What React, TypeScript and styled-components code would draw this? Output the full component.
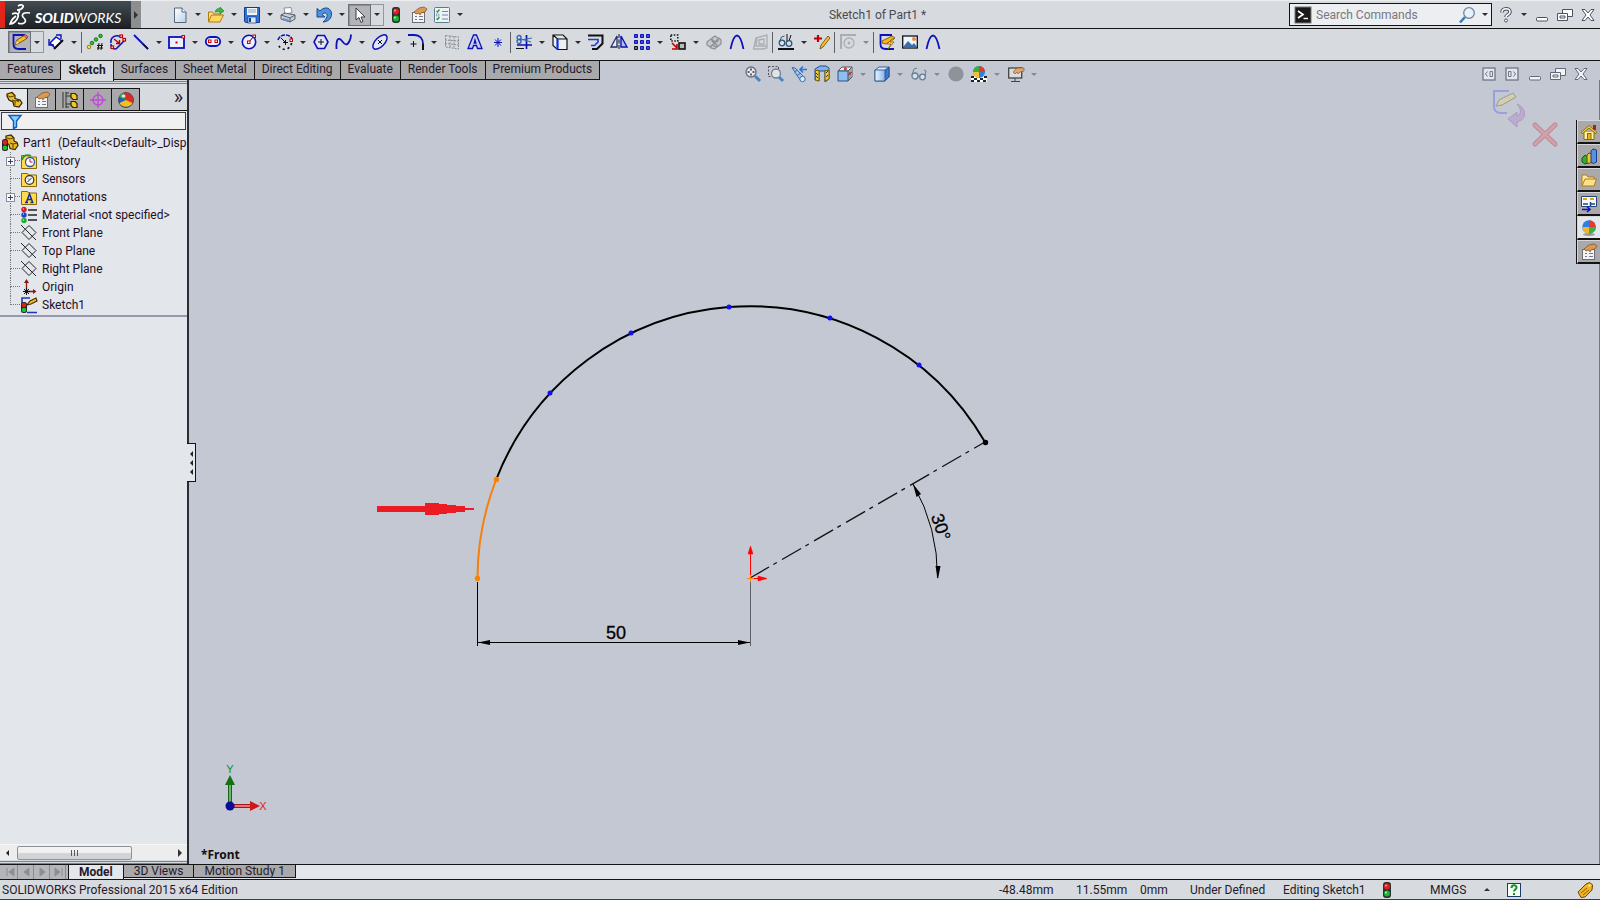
import React from "react";
import styled, { createGlobalStyle, css } from "styled-components";

const color = {
  bar: "#d7dadf",
  tab: "#a9a9ab",
  canvas: "#c4c8d3",
  panel: "#e3e6eb",
  line: "#141414",
  text: "#231a2b",
};

const GlobalStyle = createGlobalStyle`
  *, *::before, *::after { box-sizing: border-box; }
  body { margin: 0; background: ${color.bar}; }
  button, input { font: inherit; color: inherit; padding: 0; margin: 0; border: 0; background: none; }
  ul { list-style: none; margin: 0; padding: 0; }
`;

const Page = styled.div`
  display: flex;
  flex-direction: column;
  min-height: 100vh;
  overflow: hidden;
  color: ${color.text};
  font: 12px/16px Roboto, "Open Sans", sans-serif;
`;

/* ---------- icons ---------- */

const B = "#0a12b8";
const K = "#111";
const R = "#c00000";
const G = "#8b8e93";

const icons: Record<string, React.ReactNode> = {
  new: <><path d="M2.5 1h7.5l4 4v10.5h-11.5z" fill="url(#paper)" stroke="#55667a" /><path d="M10 1v4h4" fill="#fff" stroke="#55667a" /></>,
  open: <><path d="M.5 15V5h4l1.500 2h6v2" fill="#fbe08a" stroke="#b27a12" /><path d="M.5 15l3-7h12l-3.500 7z" fill="#ffd75c" stroke="#b27a12" /><path d="M7 5c1-3 3-4 5-3.500V0l4 4-4 3V5c-2-.5-3 0-5 0z" fill="#3fb63a" stroke="#1f7a1d" strokeWidth=".6" /></>,
  save: <><path d="M.5.500h15v15h-14l-1-1z" fill="#2f74d8" stroke="#123c8c" /><rect x="3" y="1" width="10" height="7" fill="#f2f5fa" /><path d="M4 3h8M4 5h8" stroke="#8ea3c0" /><rect x="4" y="10" width="8" height="6" fill="#dfe6ef" stroke="#123c8c" strokeWidth=".7" /><rect x="5" y="11" width="2" height="4" fill="#123c8c" /></>,
  print: <><path d="M4 1l7-.5 1 5-7 2z" fill="#fff" stroke="#8892a0" /><path d="M1 8l4-2 10 2v4l-5 3-9-3z" fill="#c9cfd8" stroke="#555d68" /><path d="M1 8l9 3 5-3M10 11v4" fill="none" stroke="#555d68" /><path d="M3 12l6 2" stroke="#5b93d8" strokeWidth="2" /></>,
  undo: <path d="M1 1.500v8.500h8L6 7.500c3-3 6-1 5 2-.5 2-2 4-4 5.500 6-.5 8.500-4 8.500-8C15.500 1 9-1.500 4 4z" fill="#4f93dc" stroke="#154a8e" />,
  cursor: <path d="M4 1v12l3-2.500 2 5 2-1-2-4.500h4z" fill="#fff" stroke="#333a44" />,
  traffic: <><rect x="4" y="0" width="8" height="16" rx="3" fill="#2b2f2d" /><circle cx="8" cy="4.500" r="3" fill="#e02020" /><circle cx="8" cy="11.500" r="3" fill="#19b432" /><circle cx="7" cy="3.500" r="1" fill="#ff9a8a" /><circle cx="7" cy="10.500" r="1" fill="#a6ffb0" /></>,
  props: <><rect x="1.500" y="5.500" width="12" height="10" fill="#f4f4f4" stroke="#6c6f75" /><path d="M4 9.500h2M4 12.500h2M8 9.500h4M8 12.500h4" stroke="#6c7a90" /><path d="M3 5l5-4 5-1 3 2-2 3-4 1-1 2-1-2-3 1z" fill="#d99a57" stroke="#7c4a18" strokeWidth=".7" /></>,
  list: <><rect x=".500" y=".500" width="15" height="15" rx="1" fill="#eef3f8" stroke="#5c7893" /><path d="M2.500 4l1 1 2-2.500M2.500 11.500l1 1 2-2.500" fill="none" stroke="#1d9a30" strokeWidth="1.300" /><path d="M8 4.500h6M8 8h6M8 12h6" stroke="#6f86a0" /><rect x="2.500" y="7" width="2.500" height="2" fill="none" stroke="#6f86a0" strokeWidth=".6" /></>,
  sketch: <><path d="M13 1H1.500v9q0 5 5 5H14" fill="none" stroke={B} strokeWidth="1.800" /><path d="M3 11l2-5 8-5 2.500 3-8 5z" fill="#f6c022" stroke="#6b4a08" strokeWidth=".9" /><path d="M12 1.500l1-1 3 2-1.500 2z" fill="#e06a72" stroke="#6b2a28" strokeWidth=".5" /><path d="M5 6l2.500 3L3 11z" fill="#fff0c0" stroke="#6b4a08" strokeWidth=".5" /></>,
  dimension: <><path d="M2 9l6-6 6 4-7 7z" fill="#fff" stroke={B} strokeWidth="1.500" /><path d="M6 15l9-9" stroke={K} strokeWidth="2" /><path d="M1 5v6h5M8 1h5v4" fill="none" stroke={B} strokeWidth="1.400" /></>,
  points: <><g fill="#28c428" stroke="#0a6410" strokeWidth=".8"><circle cx="5" cy="9" r="1.800" /><circle cx="9" cy="5.500" r="1.800" /><circle cx="13.500" cy="2" r="1.800" /></g><circle cx="2" cy="13" r="1.800" fill="#ffd94a" stroke="#8a6408" strokeWidth=".8" /><path d="M12 9l-1 7M15 9l-1 7M10 11.500h6M10 14h6" stroke={K} /></>,
  rotSlot: <><path d="M1 9c-1-6 5-9 10-6M6 15l9-9M1 10c0 3 2 5 5 5" fill="none" stroke={B} strokeWidth="1.600" /><g fill="#fff" stroke={R} strokeWidth="1.200"><rect x="10" y="1" width="2.500" height="2.500" /><rect x="13" y="4.500" width="2.500" height="2.500" /><rect x="1" y="12" width="2.500" height="2.500" /></g><path d="M4 5l5 4M9.500 6v3.500H6" stroke={R} fill="none" strokeWidth="1.400" /></>,
  line: <><path d="M1 1l14 14" stroke={B} strokeWidth="1.800" /><path d="M10 10l5 5" stroke={K} strokeWidth="1.500" /></>,
  rect: <><rect x="0" y="3" width="15" height="11" fill="#eef" stroke={B} strokeWidth="1.800" /><rect x="6.500" y="7.500" width="2" height="2" fill={R} /><rect x="13" y="1.500" width="2.500" height="2.500" fill="#fff" stroke={R} /></>,
  slot: <><rect x=".8" y="3" width="14.400" height="9" rx="4.500" fill="#eef" stroke={B} strokeWidth="1.800" /><g fill="#fff" stroke={R}><rect x="3.500" y="6" width="2.500" height="2.500" /><rect x="10" y="6" width="2.500" height="2.500" /></g></>,
  circle: <><circle cx="8" cy="8" r="6.700" fill="#eef" stroke={B} strokeWidth="1.600" /><path d="M8 8l5-6" stroke={K} /><rect x="6.500" y="7" width="2.500" height="2.500" fill="#fff" stroke={R} /><rect x="12" y="1" width="2.500" height="2.500" fill="#fff" stroke={R} /></>,
  arc: <><path d="M1 6C3-.5 13-.5 15 5" fill="none" stroke={B} strokeWidth="1.600" strokeDasharray="4 1" /><path d="M14.500 9c-1 7-10 9-13 2" fill="none" stroke={K} strokeWidth="1.700" strokeDasharray="2 3" /><path d="M4 4l4 4M6 8.500h5M8.500 6v5" stroke={K} /><rect x="13" y="5" width="2.500" height="2.500" fill="#fff" stroke={R} /></>,
  polygon: <><path d="M4.500 1.500h7L15 8l-3.500 6.500h-7L1 8z" fill="#e4e6f8" stroke={B} strokeWidth="1.600" /><path d="M8 5v6M5 8h6" stroke={K} /></>,
  spline: <path d="M.5 15C0 6 2 2 6 7c3 4 5 5 7.500 0C15 4 15 2 15 .5" fill="none" stroke={B} strokeWidth="1.800" />,
  ellipse: <><ellipse cx="8" cy="8" rx="9" ry="4.500" transform="rotate(-45 8 8)" fill="#e4e6f8" stroke={B} strokeWidth="1.500" /><path d="M6 6l4 4M10 6l-4 4" stroke={K} /></>,
  fillet: <><path d="M0 1h6c6 0 9 4 9 9" fill="none" stroke={B} strokeWidth="1.800" /><path d="M15 10v6" stroke={K} strokeWidth="2" /><path d="M5.500 7v6M2.500 10h6" stroke={K} /></>,
  plane: <g fill="none" stroke={G} strokeDasharray="2 1"><path d="M1.500 1.500l13 1.500v12l-13-2zM6 2v11M10 2.500v12M1 6l14 1M1 9.500l14 1.500" /></g>,
  text: <path d="M6.500 1h3l5.500 13.500h-4.500l-1-3h-3l-1 3H1zM7.300 9h1.600L8 6z" fill="#c9ccf0" stroke={B} strokeWidth="1.300" />,
  point: <path d="M8 4v9M4 8.500h8M5 5.500l6 6M11 5.500l-6 6" stroke={B} />,
  trim: <><path d="M10.500 1v14M1 11h15" stroke={B} strokeWidth="1.700" /><path d="M5 6l11-2M5 5l10 3" stroke="#3f6bb0" strokeWidth="1.200" /><circle cx="3" cy="3.500" r="2" fill="none" stroke="#2e5fb0" strokeWidth="1.300" /><circle cx="3" cy="7.500" r="2" fill="none" stroke="#2e5fb0" strokeWidth="1.300" /><path d="M0 14.500h8" stroke={K} /></>,
  convert: <><path d="M1 1h10l4 4v10.500H5.500l-4.500-4zM1 1l4.500 4H15" fill="#eef0f4" stroke={K} strokeWidth="1.200" /><path d="M5.500 5v10.500" stroke="#0a2ff0" strokeWidth="2.200" /></>,
  offset: <><path d="M0 1.500h14.500v8L9 15H4" fill="none" stroke={K} strokeWidth="2" /><path d="M0 5.500h10v2.500L6.500 11.500H3" fill="none" stroke="#1b3fd0" strokeWidth="1.700" /></>,
  mirror: <><path d="M6 2v11H0z" fill="#e9ebf5" stroke="#222a66" strokeWidth="1.300" /><path d="M10 2v11h6z" fill="#b7bff0" stroke={B} strokeWidth="1.400" /><path d="M8 0v16" stroke={K} strokeDasharray="4 1.500" /></>,
  pattern: <g fill="#4250cf" stroke={B}><path d="M.5.500h3v3h-3zM6.500.500h3v3h-3zM12.500.500h3v3h-3zM.5 6.500h3v3h-3zM6.500 6.500h3v3h-3zM12.500 6.500h3v3h-3zM6.500 12.500h3v3h-3zM12.500 12.500h3v3h-3z" /><path d="M.5 12.500h3v3h-3z" fill="#777" stroke={K} /></g>,
  move: <><rect x=".800" y="1" width="7" height="6" fill="none" stroke={K} strokeWidth="1.500" strokeDasharray="1.500 1.500" /><rect x="9" y="9" width="6" height="6" fill="#bbb" stroke={K} strokeWidth="1.600" /><path d="M2 9l5 5M7 10v5H2" stroke={R} fill="none" strokeWidth="1.600" /></>,
  grid3d: <g fill="#c3c5c9" stroke="#7b7e83" strokeWidth="1.200"><path d="M1 8l4-3 3 2 0 3-4 3-3-2zM6 4l3-2 3 2v3l-4 2-2-2zM10 7l3-3 2 2v4l-4 3-3-1v-3zM5 12l4-3 2 2-2 4-4-1z" /></g>,
  curve: <path d="M1.500 15C3 8 5 1.500 8 1.500S13 8 14.500 15" fill="none" stroke={B} strokeWidth="1.800" />,
  surface: <path d="M4 4l11-3v13l-4 1H1.500zM5 4l-1 8h11M7 6l5-1v5H7z" fill="none" stroke="#a0a2a6" strokeWidth="1.300" />,
  relations: <><path d="M0 15h16" stroke={K} strokeWidth="2" /><path d="M9 0v7M13 1l-2 6" stroke={K} /><circle cx="4" cy="9" r="2.800" fill="#cfe3f3" stroke="#34566f" strokeWidth="1.300" /><circle cx="11" cy="9.500" r="2.800" fill="#cfe3f3" stroke="#34566f" strokeWidth="1.300" /><path d="M1.500 8l2-5 3-1" fill="none" stroke="#34566f" /></>,
  repair: <><path d="M4 1v7M0 4.500h8" stroke={R} strokeWidth="2.200" /><path d="M6 15l1-4 7-9 2 2-7 9z" fill="#f5c12c" stroke="#75500a" strokeWidth=".9" /></>,
  snap: <><path d="M1 15V1h15" fill="none" stroke="#a0a3a8" strokeWidth="2" /><circle cx="9" cy="9" r="5" fill="none" stroke="#a0a3a8" strokeWidth="1.300" /><circle cx="9" cy="9" r="1.500" fill="#a0a3a8" /></>,
  rapid: <><path d="M13 1H1.500v9q0 5 5 5H15" fill="none" stroke={B} strokeWidth="1.800" /><path d="M3 7l10-5 3 2-9 6-4-1z" fill="#f6b322" stroke="#6b4a08" strokeWidth=".800" /><path d="M13 5L8 10h4l-3 5 6-7h-4l4-3z" fill="#ffe14a" stroke="#8a5a00" strokeWidth=".800" /></>,
  picture: <><rect x=".700" y="2" width="14.600" height="12" fill="#eef6ff" stroke={K} strokeWidth="1.300" /><path d="M1 13l5-6 4 4 2-2 3 4z" fill="#3d6ea8" /><circle cx="12" cy="5" r="2" fill="#f08a3a" /></>,
  zoomFit: <><path d="M10 10l5 5" stroke="#4b82c4" strokeWidth="3" /><circle cx="6" cy="6" r="5" fill="#e6e9ee" stroke="#686e7a" strokeWidth="1.300" /><path d="M6 2.500v2M6 7.500v2M2.500 6h2M7.500 6h2" stroke="#333" strokeWidth="1.500" /></>,
  zoomArea: <><rect x=".500" y=".500" width="10" height="10" fill="none" stroke="#555" strokeDasharray="2 1.500" /><path d="M11 11l4 4" stroke="#4b82c4" strokeWidth="3" /><circle cx="8" cy="7.500" r="4.500" fill="#dfe3ea" stroke="#777e8a" strokeWidth="1.300" /></>,
  prevView: <><path d="M1 1.500l3 .5 9 9-3 4-5-7z" fill="#9cc4ee" stroke="#3b6ea8" /><path d="M3 6l4-2M6 9.500L10 7" stroke="#3b6ea8" /><circle cx="11.500" cy="13" r="2.700" fill="#d9ebfb" stroke="#3b6ea8" /><path d="M16 3.500h-6M12 .5l-3 3 3 3" fill="none" stroke="#2f6fd0" strokeWidth="1.500" /></>,
  section: <><path d="M1 3l5-3h6l3 2v11l-4 3V5H5v10l-4-1z" fill="#7fb2ec" stroke="#234f8c" /><path d="M1.500 4.500H5V15l-3.500-1zM11 4.500h4V13l-4 2z" fill="#f5cf30" stroke="#77610a" /><path d="M2 7l2 2M2 10l2 2M12 7l2-2M12 11l2-2" stroke="#333" /></>,
  orient: <><path d="M5 1h10v10l-4 4V5H1z" fill="#eceff3" stroke="#555" /><path d="M1 5h10v10H1z" fill="#8fbdf0" stroke="#28538e" /><path d="M11 5l4-4M8 1v4M13 3v10M11 9l4-3" stroke="#555" /><path d="M7 3h3M13 6v3" stroke="#d22" strokeWidth="1.300" /></>,
  display: <><path d="M1 4l4-3h10v10l-4 4H1z" fill="#dce9f8" stroke="#3c5f96" /><path d="M11 4l4-3v10l-4 4z" fill="#3d79cf" stroke="#28538e" /><path d="M1 4h10v11H1z" fill="url(#cubeFace)" stroke="#3c5f96" /></>,
  glasses: <g stroke="#6a7d8e"><circle cx="4" cy="10" r="3" fill="#cfe3f3" strokeWidth="1.300" /><circle cx="11.500" cy="11" r="2.800" fill="#cfe3f3" strokeWidth="1.300" /><path d="M1 9l2-6 3-1M7 10l2 0M14 10l1-5-2-1" fill="none" /></g>,
  greyBall: <circle cx="8" cy="8" r="7.600" fill="#8e9299" />,
  scene: <><path d="M0 10h16v6H0z" fill="#fff" /><path d="M0 10h3v2H0zM3 12h3v2H3zM0 14h3v2H0zM6 14h3v2H6zM9 12h3v2H9zM13 10h3v2h-3zM12 14h3v2h-3z" fill="#222" /><circle cx="8" cy="6" r="6" fill="#2f7fe0" /><path d="M8 6V0a6 6 0 0 0-6 6z" fill="#3fae49" /><path d="M8 6V0a6 6 0 0 1 6 6z" fill="#e33b2e" /><path d="M8 6v6a6 6 0 0 1-6-6z" fill="#f4c430" /></>,
  viewSet: <><rect x=".700" y="2" width="13" height="10" fill="#d8dbe0" stroke="#444" strokeWidth="1.300" /><path d="M7 12v3M3 15.500h9" stroke="#444" /><path d="M5 6l4-4 7 0v3l-4 1-2 2-1-2-2 2z" fill="#e0a868" stroke="#7c4a18" strokeWidth=".600" /></>,
  part: <><path d="M1 2l5-1.500 3 3v3l5 1.500 2 3-3 4-5-1-1-4-4-2-2-4z" fill="#f0c02a" stroke="#332600" strokeWidth="1.200" /><path d="M1 3l3 2 4-1M6 8l3 1 5-1M9 9v4" fill="none" stroke="#5a4300" /><circle cx="12" cy="9" r="1" fill="#5a4300" /></>,
  partRoot: <><path d="M4 1l5-1 3 3v3l3 1.500 1 3-3 4-5-1-1-4-3-2z" fill="#e8b824" stroke="#332600" strokeWidth="1.200" /><path d="M8 8l3 1 4-1M11 9v4M5 3l3 1 3-1" fill="none" stroke="#5a4300" /><rect x="0" y="4" width="6" height="12" rx="2.500" fill="#222" /><circle cx="3" cy="7.500" r="2.400" fill="#e02020" /><circle cx="3" cy="12.800" r="2.400" fill="#19c432" /></>,
  config: <><path d="M1 0v16M4 0v16M4 4h5M4 12h5M4 1h3M4 15h3" stroke="#333" /><path d="M9 1.500h4l2 2v4h-4l-2-2zM9 9.500h4l2 2v4h-4l-2-2z" fill="#f4c828" stroke="#332600" strokeWidth="1.200" /></>,
  target: <g stroke="#c04ad8" fill="none" strokeWidth="1.400"><circle cx="8" cy="8" r="5" /><path d="M8 0v16M0 8h16" /></g>,
  ball: <><circle cx="8" cy="8" r="7.500" fill="#2b57c8" stroke="#222" strokeWidth=".600" /><path d="M8 8L1 5a7.500 7.500 0 0 1 5-4.500z" fill="#2fa24a" /><path d="M8 8L6 .7A7.500 7.500 0 0 1 14.500 11z" fill="#df2a20" /><path d="M8 8l6.500 3a7.500 7.500 0 0 1-13 0z" fill="#f2c21c" /><ellipse cx="5.500" cy="4" rx="2" ry="1.500" fill="#fff" opacity=".8" /></>,
  ballTask: <><ellipse cx="8" cy="14.500" rx="6" ry="1.500" fill="#9a9a9a" /><circle cx="8" cy="7" r="6.800" fill="#2f7fe0" /><path d="M8 7V.200a6.800 6.800 0 0 1 6.800 6.800z" fill="#e33b2e" /><path d="M8 7h6.800A6.800 6.800 0 0 1 8 13.800z" fill="#3fae49" /><path d="M8 7v6.800A6.800 6.800 0 0 1 1.200 7z" fill="#f2b42a" /></>,
  filter: <path d="M2 2.500h12L9.500 8v6l-3 1.500V8z" fill="#8fd0ff" stroke="#0c5cc0" strokeWidth="1.400" />,
  history: <><path d="M.500 2.500h6l1 1.500h8v11.500H.500z" fill="#ffdb4d" stroke="#8a6a08" /><circle cx="9" cy="9" r="4.500" fill="#fff" stroke="#3352b8" strokeWidth="1.300" /><path d="M9 6v3h2.500" fill="none" stroke="#b02020" /><path d="M1 7c1-5 6-6 9-4" fill="none" stroke="#1d9a30" strokeWidth="1.700" /></>,
  sensors: <><path d="M.500 2.500h6l1 1.500h8v11.500H.500z" fill="#ffdb4d" stroke="#8a6a08" /><circle cx="8.500" cy="9" r="4.300" fill="#eef4ff" stroke="#333" strokeWidth="1.200" /><path d="M6.500 11l4-4M7 7.500l1 1" stroke="#222" /></>,
  annotations: <><path d="M.500 2.500h6l1 1.500h8v11.500H.500z" fill="#ffdb4d" stroke="#8a6a08" /><path d="M4 13.500h3M9.500 13.500h3M5.500 13l3-8 3 8M6.500 10.500h4" fill="none" stroke="#12309c" strokeWidth="1.500" /></>,
  material: <><path d="M7 3h9M7 8h9M7 13h9" stroke="#222" strokeWidth="1.600" /><circle cx="3" cy="2.500" r="2.700" fill="#d82020" /><circle cx="3" cy="8" r="2.700" fill="#2040d0" /><circle cx="3" cy="13.500" r="2.700" fill="#28a838" /><path d="M2 2h1M2 7h1M2 13h1" stroke="#fff" /></>,
  planeTree: <path d="M8 .5l7 7-7 7-7-7zM0 0l15 15" fill="none" stroke="#222" />,
  origin: <><path d="M5.500 13V2M5 12.500h9" stroke="#8c1a14" strokeWidth="1.300" /><path d="M3 4l2.500-4L8 4zM12 10l3.500 2.500L12 15z" fill="#8c1a14" /><path d="M3 10l5 5M8 10l-5 5M5.500 9v7M2 12.500h7" stroke={K} /></>,
  sketchTree: <><path d="M9 1H1v7M6 15.500h10" fill="none" stroke="#1c36c0" strokeWidth="1.600" /><path d="M6 8l3-4 6-3 1 3-6 3z" fill="#f6b832" stroke="#4a3206" strokeWidth="1.200" /><rect x="0" y="5" width="6" height="11" rx="2.500" fill="#222" /><circle cx="3" cy="8" r="2.300" fill="#e02020" /><circle cx="3" cy="13" r="2.300" fill="#19c432" /></>,
  home: <><rect x="12" y="1" width="3" height="5" fill="#b02020" /><path d="M3 8v7.500h10V8" fill="#fff0a8" stroke="#8a6a08" /><path d="M0 8.500l8-7 8 7-1.500 1L8 4 1.500 9.500z" fill="#ffd028" stroke="#6a4c04" strokeWidth=".700" /><rect x="6.500" y="9.500" width="3.500" height="6" fill="#e8b420" stroke="#8a6a08" /></>,
  library: <><path d="M1 10l3-3 3 2v6l-3 1-3-2z" fill="#2fae34" stroke="#0b5a10" /><path d="M6 7l2-2 3 1v8l-3 1.500-2-1z" fill="#f2c428" stroke="#6a4c04" /><path d="M10 3l2-2 3.500 1v12l-3 1.500-2.500-1z" fill="#5a8fe8" stroke="#173c88" /></>,
  folder: <><path d="M1 14V3h5l1 2h6v3" fill="#ffe9a0" stroke="#b07a18" /><path d="M1 14l3-7h11.500L13 14z" fill="#ffe08a" stroke="#b07a18" /></>,
  palette: <><path d="M.500.500h15v10H.500z" fill="#f5f8fc" stroke="#24447c" /><path d="M2 3h4M9 3h4" stroke="#d8a810" strokeWidth="2" /><path d="M2 8h5M9.500 6v4M9 8h5" stroke="#24447c" strokeWidth="1.500" /><path d="M1 13.500h7M6 10.500l3 3-3 2.500" fill="none" stroke="#0a12d8" strokeWidth="1.600" /></>,
  terminal: <><rect width="16" height="16" fill="#1a1a1a" stroke="#777" /><path d="M3 4l5 3.500L3 11" fill="none" stroke="#fff" strokeWidth="1.700" /><path d="M8.500 11.500H13" stroke="#fff" strokeWidth="1.400" /></>,
  magnifier: <><path d="M6 10l-5 5.500" stroke="#3c7ab4" strokeWidth="2.600" /><circle cx="10" cy="6" r="5.300" fill="#e8f1fa" stroke="#6d86a4" strokeWidth="1.300" /></>,
  help: <><path d="M4 5.500c0-5 8-5 8-.5 0 3-4 2.500-4 5" fill="none" stroke="#4c5262" strokeWidth="3.600" /><path d="M4 5.500c0-5 8-5 8-.5 0 3-4 2.500-4 5" fill="none" stroke="#fff" strokeWidth="1.500" /><circle cx="8" cy="13.500" r="1.500" fill="#fff" stroke="#4c5262" /></>,
  minimize: <rect x="2.500" y="10.500" width="11" height="3.500" rx="1" fill="#fff" stroke="#4c5262" />,
  restore: <g fill="#fff" stroke="#4c5262"><path d="M5.500 2.500h10v7h-10z" /><path d="M.5 6.500h10v7H.500zM3 9h5v2H3z" /></g>,
  close: <path d="M2 2.500h3L8 6l3-3.500h3L10 8l4 5.500h-3L8 10l-3 3.500H2L6 8z" fill="#fff" stroke="#4c5262" />,
  dockLeft: <><rect x="2" y="2" width="12" height="12" fill="#eceef2" stroke="#5d6272" strokeWidth="1.300" /><path d="M6.500 5.500L4.500 8l2 2.500M9 5.500h2.500v5H9z" fill="none" stroke="#5d6272" /></>,
  dockRight: <><rect x="2" y="2" width="12" height="12" fill="#eceef2" stroke="#5d6272" strokeWidth="1.300" /><path d="M9.500 5.500l2 2.500-2 2.500M4.500 5.500H7v5H4.500z" fill="none" stroke="#5d6272" /></>,
  tag: <><path d="M1 10L9 2l4-1.500L15.500 3 15 8l-7 7-4 .5z" fill="#f2b420" stroke="#6a4604" /><path d="M4 11l6-5M6 13l6-5" stroke="#8a5c08" /><circle cx="12.500" cy="3.500" r="1" fill="#fff" /></>,
  quickHelp: <><rect x="1.500" y="1.500" width="13" height="13" fill="#f4fff4" stroke="#1c3a6a" /><path d="M5.500 6c0-3.500 5-3.500 5-.5 0 2-2.500 2-2.500 4M8 11v2" fill="none" stroke="#12902a" strokeWidth="2" /></>,
};

const Glyph = styled.svg`
  display: block;
  flex: none;
  overflow: visible;
`;

const Icon = ({ name }: { name: string }) => (
  <Glyph width="16" height="16" viewBox="0 0 16 16" aria-hidden="true">{icons[name]}</Glyph>
);

const HiddenSvg = styled.svg`
  position: absolute;
`;

const Defs = () => (
  <HiddenSvg width="0" height="0" aria-hidden="true">
    <defs>
      <linearGradient id="paper" x1="0" y1="0" x2="1" y2="1"><stop offset="0" stopColor="#fff" /><stop offset="1" stopColor="#b9d3ea" /></linearGradient>
      <linearGradient id="cubeFace" x1="0" y1="0" x2="1" y2="0"><stop offset="0" stopColor="#eef5fd" /><stop offset="1" stopColor="#86b4ee" /></linearGradient>
    </defs>
  </HiddenSvg>
);

/* ---------- buttons ---------- */

const ToolButton = styled.button<{ $active?: boolean; $dim?: boolean }>`
  display: flex;
  flex: none;
  align-items: center;
  justify-content: center;
  width: 23px;
  height: 22px;
  opacity: ${(p) => (p.$dim ? 0.8 : 1)};
  ${(p) => p.$active && css`background: #b2b4b9; border: 1px solid #6d7076; box-shadow: inset 1px 1px 1px #8c8f95;`}
`;

const ArrowButton = styled.button<{ $wide?: boolean; $framed?: boolean }>`
  display: flex;
  flex: none;
  align-items: center;
  justify-content: center;
  width: ${(p) => (p.$wide ? 14 : 13)}px;
  height: 22px;
  ${(p) => p.$framed && css`border: 1px solid #94979d; border-left: 0;`}
`;

const Caret = styled.span<{ $dim?: boolean }>`
  border: 3px solid transparent;
  border-top: 3px solid ${(p) => (p.$dim ? "#85888f" : "#2c2c30")};
  border-bottom: 0;
`;

const Separator = styled.span`
  flex: none;
  width: 2px;
  height: 21px;
  margin-left: 1px;
  border-left: 1px solid #5e6066;
`;

type Tool = [name: string, label: string, menu?: "menu" | "", state?: "active" | "dim"];

const ToolList = ({ tools, wide }: { tools: (Tool | "|")[]; wide?: boolean }) => (
  <>
    {tools.map((t, i) =>
      t === "|" ? (
        <Separator key={i} />
      ) : (
        <React.Fragment key={i}>
          <ToolButton type="button" aria-label={t[1]} $active={t[3] === "active"} $dim={t[3] === "dim"}>
            <Icon name={t[0]} />
          </ToolButton>
          {t[2] && (
            <ArrowButton type="button" aria-label={`${t[1]} options`} $wide={wide} $framed={t[3] === "active"}>
              <Caret $dim={wide || t[3] === "dim"} />
            </ArrowButton>
          )}
        </React.Fragment>
      )
    )}
  </>
);

/* ---------- title bar ---------- */

const TitleBar = styled.header`
  display: flex;
  align-items: center;
  height: 29px;
  border-top: 1px solid #eceef0;
  border-bottom: 1px solid ${color.line};
  background: ${color.bar};
`;

const Brand = styled.div`
  display: flex;
  align-items: center;
  flex: none;
  gap: 4px;
  width: 131px;
  height: 27px;
  padding-left: 4px;
  border-left: 5px solid #e1251b;
  background: linear-gradient(#434c52, #1b2126);
  color: #fff;
  font: 14px/20px Lato, sans-serif;
`;

const BrandName = styled.span`
  padding-top: 6px;
  font-style: italic;
  b { font-weight: 900; }
`;

const MenuButton = styled.button`
  display: flex;
  align-items: center;
  justify-content: center;
  width: 10px;
  height: 27px;
  margin-right: 27px;
  background: #8d8e90;
`;

const RightCaret = styled.span`
  border: 4px solid transparent;
  border-left: 4px solid #333;
  border-right: 0;
`;

const DocTitle = styled.h1`
  flex: 1;
  margin: 0;
  font: inherit;
  text-align: center;
  color: #4a4a52;
`;

const SearchBox = styled.form`
  display: flex;
  align-items: center;
  flex: none;
  width: 203px;
  height: 23px;
  padding-left: 5px;
  border: 1px solid ${color.line};
  background: #eceef1;
`;

const SearchInput = styled.input`
  flex: 1;
  min-width: 0;
  height: 20px;
  padding-left: 5px;
  &::placeholder { color: #77787e; opacity: 1; }
`;

const WindowControls = styled.div`
  display: flex;
  align-items: center;
  flex: none;
  padding: 0 1px 0 2px;
`;

const CommandBar = styled.div`
  display: flex;
  align-items: center;
  height: 32px;
  padding: 2px 8px 7px;
  border-bottom: 1px solid ${color.line};
  background: ${color.bar};
`;

/* ---------- workspace ---------- */

const Workspace = styled.main`
  position: relative;
  display: flex;
  flex: 1;
  flex-direction: column;
  background: ${color.canvas};
`;

const CommandTabs = styled.nav`
  position: relative;
  z-index: 1;
  display: flex;
  height: 19px;
`;

const CommandTab = styled.button<{ $active?: boolean }>`
  height: ${(p) => (p.$active ? 20 : 19)}px;
  padding: 0 7px 2px;
  border-right: 1px solid ${color.line};
  border-bottom: ${(p) => (p.$active ? 0 : 1)}px solid ${color.line};
  background: ${(p) => (p.$active ? color.bar : color.tab)};
  font-weight: ${(p) => (p.$active ? 700 : 400)};
  line-height: 16px;
  white-space: nowrap;
`;

const HeadsUp = styled.div`
  position: absolute;
  top: 2px;
  left: 741px;
  display: flex;
  align-items: center;
`;

const DocControls = styled.div`
  position: absolute;
  top: 2px;
  right: 8px;
  display: flex;
  opacity: 0.8;
`;

const Confirm = styled.div`
  position: absolute;
  top: 27px;
  right: 40px;
  display: flex;
  opacity: 0.35;
`;

const ConfirmButton = styled.button<{ $low?: boolean }>`
  height: 42px;
  padding-top: ${(p) => (p.$low ? 34 : 0)}px;
`;

const TaskTabs = styled.nav`
  position: absolute;
  top: 59px;
  right: 0;
  display: flex;
  flex-direction: column;
  border-left: 1px solid ${color.line};
`;

const TaskTab = styled.button<{ $active?: boolean }>`
  display: flex;
  align-items: center;
  justify-content: center;
  width: 23px;
  height: 24px;
  border-top: 1px solid #d6d6d8;
  border-left: 1px solid #d6d6d8;
  border-bottom: 2px solid ${color.line};
  background: ${(p) => (p.$active ? color.panel : color.tab)};
`;

const Panes = styled.div`
  display: flex;
  flex: 1;
`;

const SidePanel = styled.aside`
  position: relative;
  display: flex;
  flex: none;
  flex-direction: column;
  width: 189px;
  border-right: 2px solid #2a2d33;
  background: ${color.panel};
`;

const PaneEdge = styled.div`
  height: 4px;
  border-top: 1px solid ${color.bar};
  border-bottom: 1px solid #7c7f96;
  background: linear-gradient(#7c7f96 1px, ${color.bar} 1px);
`;

const PanelTabs = styled.div`
  display: flex;
  height: 27px;
  padding-top: 4px;
  border-bottom: 1px solid ${color.line};
  background: ${color.bar};
`;

const PanelTab = styled.button<{ $active?: boolean }>`
  display: flex;
  align-items: center;
  justify-content: center;
  width: 28px;
  height: 22px;
  border-top: 1px solid ${color.line};
  border-right: 1px solid ${color.line};
  background: ${(p) => (p.$active ? color.panel : color.tab)};
`;

const MoreTabs = styled.button`
  margin-left: auto;
  padding: 0 4px 4px;
  font-size: 20px;
`;

const FilterBox = styled.label`
  display: flex;
  align-items: center;
  height: 18px;
  margin: 1px 1px 4px;
  padding-left: 5px;
  border: 1px solid #3a3d44;
  background: #f0f0f0;
`;

const FilterInput = styled.input`
  flex: 1;
  min-width: 0;
`;

const Tree = styled.ul`
  padding-bottom: 1px;
  border-bottom: 2px solid #9699ad;
`;

const TreeRow = styled.li<{ $root?: boolean; $last?: boolean }>`
  display: flex;
  align-items: center;
  gap: 5px;
  position: relative;
  height: 18px;
  padding-left: ${(p) => (p.$root ? 2 : 21)}px;
  white-space: nowrap;
  color: #1c0f26;
  ${(p) => !p.$root && css`
    &::before {
      content: "";
      position: absolute;
      left: 10px;
      top: 0;
      width: 10px;
      height: 9px;
      border-left: 1px dotted #777;
      border-bottom: 1px dotted #777;
    }
  `}
  ${(p) => !p.$root && !p.$last && css`
    &::after {
      content: "";
      position: absolute;
      left: 10px;
      top: 9px;
      height: 9px;
      border-left: 1px dotted #777;
    }
  `}
`;

const Expander = styled.button`
  position: absolute;
  z-index: 1;
  left: 6px;
  top: 5px;
  width: 9px;
  height: 9px;
  border: 1px solid #8b8f98;
  background:
    linear-gradient(#29407c, #29407c) center / 5px 1px no-repeat,
    linear-gradient(#29407c, #29407c) center / 1px 5px no-repeat,
    #fafafa;
`;

const Splitter = styled.button`
  position: absolute;
  top: 363px;
  right: -9px;
  display: flex;
  flex-direction: column;
  align-items: center;
  justify-content: center;
  gap: 3px;
  width: 9px;
  height: 39px;
  border: 1px solid ${color.line};
  border-left: 0;
  background: ${color.panel};
`;

const LeftCaret = styled.span`
  border: 3px solid transparent;
  border-right: 3px solid #222;
  border-left: 0;
`;

const ScrollRow = styled.div`
  display: flex;
  align-items: center;
  justify-content: space-between;
  height: 16px;
  margin-top: auto;
  border-top: 1px solid #f6f6f6;
  background: #ededee;
`;

const ScrollButton = styled.button`
  display: flex;
  align-items: center;
  justify-content: center;
  width: 14px;
  height: 15px;
`;

const ScrollTrack = styled.div`
  flex: 1;
  padding: 0 3px;
`;

const ScrollThumb = styled.div`
  display: flex;
  align-items: center;
  justify-content: center;
  width: 75%;
  height: 14px;
  border: 1px solid #8f9196;
  border-radius: 2px;
  background: linear-gradient(#f1f1f2 45%, #d2d3d6 55%);
`;

const Grip = styled.span`
  width: 7px;
  height: 6px;
  background: repeating-linear-gradient(90deg, #55585e 0 1px, transparent 1px 3px);
`;

const Viewport = styled.section`
  position: relative;
  flex: 1;
  min-width: 0;
  border-right: 1px solid #6f7888;
`;

const Drawing = styled.svg`
  position: absolute;
  inset: 0;
  width: 100%;
  height: 100%;
`;

/* ---------- footer ---------- */

const SheetTabs = styled.nav`
  display: flex;
  height: 16px;
  border-top: 1px solid ${color.line};
  border-bottom: 1px solid ${color.line};
  background: ${color.panel};
`;

const StepButtons = styled.div`
  display: flex;
  width: 69px;
  padding-left: 2px;
  background: #b5b6b9;
  border-right: 1px solid ${color.line};
`;

const StepButton = styled.button`
  display: flex;
  align-items: center;
  justify-content: center;
  width: 16px;
  height: 14px;
  border-right: 1px solid #8b8c90;
`;

const SheetTab = styled.button<{ $active?: boolean }>`
  height: ${(p) => (p.$active ? 14 : 13)}px;
  padding: 0 10px;
  border-right: 1px solid ${color.line};
  border-bottom: ${(p) => (p.$active ? 0 : 1)}px solid ${color.line};
  background: ${(p) => (p.$active ? color.panel : color.tab)};
  font-weight: ${(p) => (p.$active ? 700 : 400)};
  line-height: 12px;
  white-space: nowrap;
`;

const StatusBar = styled.footer`
  display: flex;
  align-items: center;
  height: 20px;
  padding: 0 7px 0 2px;
  border-bottom: 1px solid #3c3c40;
  background: ${color.bar};
  white-space: nowrap;
`;

const Edition = styled.span`
  flex: 1;
`;

const Status = styled.span<{ $w: number }>`
  flex: none;
  width: ${(p) => p.$w}px;
`;

const StatusSlot = styled.span<{ $w: number }>`
  display: flex;
  flex: none;
  width: ${(p) => p.$w}px;
`;

const UpCaret = styled.span`
  border: 3px solid transparent;
  border-bottom: 3px solid #333;
  border-top: 0;
`;

/* ---------- data ---------- */

const fileTools: (Tool | "|")[] = [
  ["new", "New", "menu"],
  ["open", "Open", "menu"],
  ["save", "Save", "menu"],
  ["print", "Print", "menu"],
  ["undo", "Undo", "menu"],
  ["cursor", "Select", "menu", "active"],
  ["traffic", "Rebuild"],
  ["props", "File Properties"],
  ["list", "Options", "menu"],
];

const sketchTools: (Tool | "|")[] = [
  ["sketch", "Exit Sketch", "menu", "active"],
  ["dimension", "Smart Dimension", "menu"],
  "|",
  ["points", "Sketch Numbering"],
  ["rotSlot", "Contact Tangent"],
  ["line", "Line", "menu"],
  ["rect", "Rectangle", "menu"],
  ["slot", "Slot", "menu"],
  ["circle", "Circle", "menu"],
  ["arc", "Arc", "menu"],
  ["polygon", "Polygon"],
  ["spline", "Spline", "menu"],
  ["ellipse", "Ellipse", "menu"],
  ["fillet", "Fillet", "menu"],
  ["plane", "Plane"],
  ["text", "Text"],
  ["point", "Point"],
  "|",
  ["trim", "Trim Entities", "menu"],
  ["convert", "Convert Entities", "menu"],
  ["offset", "Offset Entities"],
  ["mirror", "Mirror Entities"],
  ["pattern", "Linear Pattern", "menu"],
  ["move", "Move Entities", "menu"],
  ["grid3d", "Grid System", "", "dim"],
  ["curve", "Curve"],
  ["surface", "Surface Sketch", "", "dim"],
  "|",
  ["relations", "Display Relations", "menu"],
  ["repair", "Repair Sketch"],
  "|",
  ["snap", "Quick Snaps", "menu", "dim"],
  "|",
  ["rapid", "Rapid Sketch"],
  ["picture", "Sketch Picture"],
  ["curve", "Equation Curve"],
];

const viewTools: (Tool | "|")[] = [
  ["zoomFit", "Zoom to Fit"],
  ["zoomArea", "Zoom to Area"],
  ["prevView", "Previous View"],
  ["section", "Section View"],
  ["orient", "View Orientation", "menu"],
  ["display", "Display Style", "menu"],
  ["glasses", "Hide/Show Items", "menu"],
  ["greyBall", "Edit Appearance"],
  ["scene", "Apply Scene", "menu"],
  ["viewSet", "View Settings", "menu"],
];

const commandTabs = ["Features", "Sketch", "Surfaces", "Sheet Metal", "Direct Editing", "Evaluate", "Render Tools", "Premium Products"];

const treeItems: { icon: string; label: string; expandable?: boolean }[] = [
  { icon: "history", label: "History", expandable: true },
  { icon: "sensors", label: "Sensors" },
  { icon: "annotations", label: "Annotations", expandable: true },
  { icon: "material", label: "Material <not specified>" },
  { icon: "planeTree", label: "Front Plane" },
  { icon: "planeTree", label: "Top Plane" },
  { icon: "planeTree", label: "Right Plane" },
  { icon: "origin", label: "Origin" },
  { icon: "sketchTree", label: "Sketch1" },
];

const panelTabs: [string, string][] = [
  ["part", "Feature tree"],
  ["props", "Property manager"],
  ["config", "Configurations"],
  ["target", "DimXpert"],
  ["ball", "Display manager"],
];

const taskTabs: [string, string][] = [
  ["home", "Resources"],
  ["library", "Design Library"],
  ["folder", "File Explorer"],
  ["palette", "View Palette"],
  ["ballTask", "Appearances"],
  ["props", "Custom Properties"],
];

const splinePoints = [[361, 313], [442, 253], [540, 227], [641, 238], [730, 285]];

const stepPaths = ["M3 2v8M10 2L5 6l5 4z", "M9 2L4 6l5 4z", "M4 2l5 4-5 4z", "M3 2l5 4-5 4zM10 2v8"];

/* The sketch uses canvas pixels, with the origin of the part at (561, 498). */
const SketchDrawing = () => (
  <Drawing role="img" aria-label="Arc sketch with a 50 mm radius and a 30 degree angle">
    <path d="M307 400A272 272 0 0 1 796 362" fill="none" stroke="#000" strokeWidth="2" />
    <path d="M288.500 498A272 272 0 0 1 307 400" fill="none" stroke="#f77f0a" strokeWidth="2" />
    <g fill="#1010f0">
      {splinePoints.map(([x, y]) => <circle key={x} cx={x} cy={y} r="2.500" />)}
    </g>
    <circle cx="288.500" cy="498.500" r="2.700" fill="#ff8000" />
    <circle cx="307.500" cy="399.500" r="2.700" fill="#ff8000" />
    <circle cx="796.500" cy="362.500" r="2.700" />
    <path d="M188 426h48v-3h14v1h8v1h9v1h9v2h9v2h-9v2h-9v1h-9v1h-8v1h-14v-3h-48zM285 428h0v2h0z" fill="#ed1c24" />
    <path d="M561 498L796 362" stroke="#111" strokeWidth="1.300" strokeDasharray="22 5 4 6" />
    <g stroke="#000">
      <path d="M288.500 502v64M289 562.500h272" />
      <path d="M561.500 502v64" stroke="#5d6068" />
      <path d="M724 404A187 187 0 0 1 748.500 498" fill="none" />
    </g>
    <path d="M289 562.500l12-2.500v5zM561 562.500l-12-2.500v5zM724 404l8 10-4.500 3zM749 499l-2.500-13h5z" />
    <g stroke="#f00" fill="#f00">
      <path d="M561.500 498V472M561 498.500h9" />
      <path d="M561.500 466l2.500 8h-5zM578 498.500l-9-2.500v5z" strokeWidth=".5" />
    </g>
    <path d="M558 498.500h7M561.500 495v7" stroke="#ff8a00" />
    <g fontFamily="'Liberation Sans', Arial, sans-serif" fontSize="18" textAnchor="middle" stroke="#000" strokeWidth=".3">
      <text x="427" y="559">50</text>
      <text transform="translate(746 449) rotate(72)">30°</text>
    </g>
    <g fontSize="11" fontFamily="'Liberation Sans', Arial, sans-serif" textAnchor="middle">
      <text x="41" y="693" fill="#1a8a1a">Y</text>
      <text x="74" y="730" fill="#e02020">X</text>
    </g>
    <path d="M39.500 704h3v20h-3z" fill="#6db36d" stroke="#1a641a" />
    <path d="M41 695l5 10H36z" fill="#157015" />
    <path d="M45 724.500h17v3H45z" fill="#f07070" stroke="#a01818" />
    <path d="M71 726l-10-5v10z" fill="#d01818" />
    <circle cx="41" cy="726" r="4.500" fill="#0c0c98" />
    <text x="12" y="779" fontSize="12" fontWeight="700" fontFamily="'Noto Sans', sans-serif" fill="#111">*Front</text>
  </Drawing>
);

export default function App() {
  return (
    <Page>
      <GlobalStyle />
      <Defs />
      <TitleBar>
        <Brand>
          <Glyph width="22" height="22" viewBox="0 0 22 22" aria-hidden="true">
            <path d="M9 2c3-2 6-1 5 1s-4 3-6 3c3 0 3 2 1 4M3 10c5-2 7 0 6 3-1 4-5 7-8 7 1-3 3-6 6-8M21 9c-6-1-9 1-7 4 2 2 4 4 1 6-2 1-4 1-6 0" fill="none" stroke="#fff" strokeWidth="1.700" />
          </Glyph>
          <BrandName><b>SOLID</b>WORKS</BrandName>
        </Brand>
        <MenuButton type="button" aria-label="Show menu"><RightCaret /></MenuButton>
        <ToolList tools={fileTools} />
        <DocTitle>Sketch1 of Part1 *</DocTitle>
        <SearchBox onSubmit={(e) => e.preventDefault()}>
          <Icon name="terminal" />
          <SearchInput type="search" aria-label="Search Commands" placeholder="Search Commands" />
          <ToolList tools={[["magnifier", "Search", "menu"]]} />
        </SearchBox>
        <WindowControls>
          <ToolList tools={[["help", "Help", "menu"], ["minimize", "Minimize"], ["restore", "Restore"], ["close", "Close"]]} />
        </WindowControls>
      </TitleBar>
      <CommandBar>
        <ToolList tools={sketchTools} />
      </CommandBar>

      <Workspace>
        <CommandTabs>
          {commandTabs.map((t) => <CommandTab type="button" key={t} $active={t === "Sketch"}>{t}</CommandTab>)}
        </CommandTabs>
        <Panes>
          <SidePanel>
            <PaneEdge />
            <PanelTabs>
              {panelTabs.map(([icon, label], i) => (
                <PanelTab type="button" key={icon} aria-label={label} $active={i === 0}><Icon name={icon} /></PanelTab>
              ))}
              <MoreTabs type="button" aria-label="More tabs">»</MoreTabs>
            </PanelTabs>
            <FilterBox>
              <Icon name="filter" />
              <FilterInput aria-label="Filter tree" />
            </FilterBox>
            <Tree>
              <TreeRow $root><Icon name="partRoot" />Part1&nbsp; (Default&lt;&lt;Default&gt;_Disp</TreeRow>
              {treeItems.map((item, i) => (
                <TreeRow key={item.label} $last={i === treeItems.length - 1}>
                  {item.expandable && <Expander type="button" aria-label={`Expand ${item.label}`} />}
                  <Icon name={item.icon} />
                  {item.label}
                </TreeRow>
              ))}
            </Tree>
            <Splitter type="button" aria-label="Collapse panel"><LeftCaret /><LeftCaret /><LeftCaret /></Splitter>
            <ScrollRow>
              <ScrollButton type="button" aria-label="Scroll left"><LeftCaret /></ScrollButton>
              <ScrollTrack><ScrollThumb><Grip /></ScrollThumb></ScrollTrack>
              <ScrollButton type="button" aria-label="Scroll right"><RightCaret /></ScrollButton>
            </ScrollRow>
            <PaneEdge />
          </SidePanel>
          <Viewport>
            <SketchDrawing />
          </Viewport>
        </Panes>
        <HeadsUp><ToolList wide tools={viewTools} /></HeadsUp>
        <DocControls>
          <ToolList tools={[["dockLeft", "Dock left"], ["dockRight", "Dock right"], ["minimize", "Minimize document"], ["restore", "Restore document"], ["close", "Close document"]]} />
        </DocControls>
        <Confirm>
          <ConfirmButton type="button" aria-label="Accept sketch">
            <Glyph width="40" height="42" viewBox="0 0 40 42">
              <path d="M19 3H4v15q0 7 7 7h6" fill="none" stroke="#4a5ae8" strokeWidth="2" />
              <path d="M6 18l3-6 14-7 3 4-14 8z" fill="#f4dc60" stroke="#444" />
              <path d="M27 16c10 4 10 16 0 18v5L18 31l9-7v4c5-2 4-8 0-12z" fill="#a878c8" stroke="#7a4a98" />
            </Glyph>
          </ConfirmButton>
          <ConfirmButton type="button" aria-label="Cancel sketch" $low>
            <Glyph width="30" height="24" viewBox="0 0 30 24">
              <path d="M5 3l20 19M25 3L5 22" stroke="#a02028" strokeWidth="5" strokeLinecap="round" />
              <path d="M5 3l20 19M25 3L5 22" stroke="#f05a60" strokeWidth="3" strokeLinecap="round" />
            </Glyph>
          </ConfirmButton>
        </Confirm>
        <TaskTabs>
          {taskTabs.map(([icon, label]) => (
            <TaskTab type="button" key={icon} aria-label={label} $active={icon === "ballTask"}><Icon name={icon} /></TaskTab>
          ))}
        </TaskTabs>
      </Workspace>

      <SheetTabs>
        <StepButtons>
          {stepPaths.map((d, i) => (
            <StepButton type="button" key={d} aria-label={["First", "Previous", "Next", "Last"][i]}>
              <Glyph width="12" height="12" viewBox="0 0 12 12"><path d={d} fill="#8d8e92" stroke="#8d8e92" /></Glyph>
            </StepButton>
          ))}
        </StepButtons>
        {["Model", "3D Views", "Motion Study 1"].map((t) => <SheetTab type="button" key={t} $active={t === "Model"}>{t}</SheetTab>)}
      </SheetTabs>
      <StatusBar>
        <Edition>SOLIDWORKS Professional 2015 x64 Edition</Edition>
        <Status $w={77}>-48.48mm</Status>
        <Status $w={64}>11.55mm</Status>
        <Status $w={50}>0mm</Status>
        <Status $w={93}>Under Defined</Status>
        <Status $w={96}>Editing Sketch1</Status>
        <StatusSlot $w={51}><Icon name="traffic" /></StatusSlot>
        <Status $w={54}>MMGS</Status>
        <StatusSlot $w={22}><UpCaret /></StatusSlot>
        <StatusSlot $w={71}><Icon name="quickHelp" /></StatusSlot>
        <Icon name="tag" />
      </StatusBar>
    </Page>
  );
}
